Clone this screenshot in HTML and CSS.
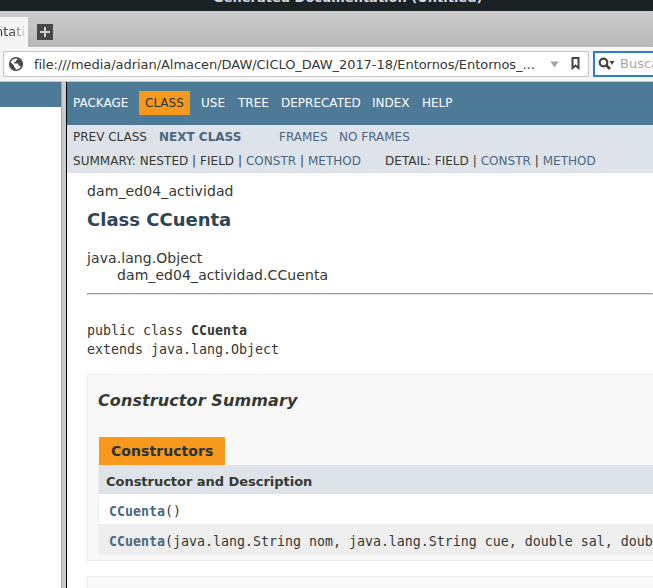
FILE: index.html
```html
<!DOCTYPE html>
<html lang="es">
<head>
<meta charset="utf-8">
<title>Generated Documentation (Untitled)</title>
<link rel="stylesheet" href="styles.css">
</head>
<body>
<div class="titlebar"><span>Generated Documentation (Untitled)</span></div>
<div class="tabs">
  <div class="tab"><span>ntati</span></div>
  <svg class="newtab" width="16" height="16" viewBox="0 0 16 16"><path fill="#474747" d="M0 0h16v16H0z"/><path fill="#d0d0d0" d="M7 3h2v4h4v2H9v4H7V9H3V7h4z"/></svg>
</div>
<div class="toolbar">
  <div class="address">
    <svg class="globe" width="16" height="16" viewBox="0 0 16 16"><circle cx="8" cy="8" r="6.300" fill="#fff" stroke="#4b4b4b" stroke-width="1.500"/><path fill="#4b4b4b" d="M2 5.500L6 9.500v1.200l1.500 1.300V14.500L4 13.500 1.500 10zM9.500 2v1.500L8 4.500v1.300H6.300v1.700H10l.8 2.300 1.400.3 1 1.400L14.500 9V6L12.500 3z"/></svg>
    <span class="url">file:///media/adrian/Almacen/DAW/CICLO_DAW_2017-18/Entornos/Entornos_...</span>
    <svg class="drop" width="9" height="7" viewBox="0 0 9 7"><path fill="#a5a5a5" d="M.3.500h8.400L4.500 6.500z"/></svg>
    <svg class="mark" width="9" height="14" viewBox="0 0 9 14"><path fill="none" stroke="#444" stroke-width="2" d="M1.500 1h6v10L4.500 8.500 1.500 11z"/></svg>
  </div>
  <div class="search">
    <svg width="17" height="14" viewBox="0 0 17 14"><circle cx="5.500" cy="5.500" r="3.800" fill="none" stroke="#444" stroke-width="2.200"/><path d="M8 8l4 4" stroke="#444" stroke-width="2.600"/><path fill="#444" d="M11.500 4h5l-2.500 4z"/></svg>
    <span>Buscar</span>
  </div>
</div>
<div class="frames">
  <div class="side"><div class="sidebar-top"></div></div>
  <div class="splitter"></div>
  <main>
    <nav class="topnav"><span>PACKAGE</span><span class="active">CLASS</span><span>USE</span><span>TREE</span><span>DEPRECATED</span><span>INDEX</span><span>HELP</span></nav>
    <div class="subnav">
      <div class="line seq"><span>PREV CLASS</span><a class="next">NEXT CLASS</a><a>FRAMES</a><a>NO FRAMES</a></div>
      <div class="line detail"><span>SUMMARY: NESTED | FIELD | <a>CONSTR</a> | <a>METHOD</a></span><span>DETAIL: FIELD | <a>CONSTR</a> | <a>METHOD</a></span></div>
    </div>
    <div class="content">
      <div class="package">dam_ed04_actividad</div>
      <h2>Class CCuenta</h2>
      <div class="tree"><div>java.lang.Object</div><div class="child">dam_ed04_actividad.CCuenta</div></div>
      <hr>
      <pre class="signature">public class <b>CCuenta</b>
extends java.lang.Object</pre>
      <section class="summary">
        <h3>Constructor Summary</h3>
        <div class="caption">Constructors</div>
        <div class="table">
          <div class="head">Constructor and Description</div>
          <div class="row"><code><a>CCuenta</a>()</code></div>
          <div class="row alt"><code><a>CCuenta</a>(java.lang.String nom, java.lang.String cue, double sal, double tipo)</code></div>
        </div>
      </section>
      <section class="summary nextbox"></section>
    </div>
  </main>
</div>
</body>
</html>
```

FILE: styles.css
```css
* { box-sizing: border-box; }
body { margin: 0; width: 653px; height: 588px; overflow: hidden; background: #fff; color: #353833; font-family: "DejaVu Sans", sans-serif; font-size: 14px; white-space: nowrap; }
svg { display: block; flex: none; }
.titlebar { height: 11px; background: #1b2224; color: #d3dae3; overflow: hidden; font-weight: bold; font-size: 13px; line-height: 16px; padding-left: 213px; }
.titlebar span { display: block; margin-top: -10px; }
.tabs { height: 36px; display: flex; background: linear-gradient(#cdcdcd, #b7b7b7); }
.tab { width: 28px; height: 30px; margin-top: 6px; background: #f5f5f5; overflow: hidden; line-height: 30px; font-size: 13px; }
.tab span { display: block; width: 32px; margin-left: -5px; background: linear-gradient(90deg, #353833 50%, #f5f5f5 100%); background-clip: text; color: transparent; }
.newtab { margin: 13px 0 0 9px; }
.toolbar { height: 35px; background: #f6f6f6; border-bottom: 1px solid #c8c8c8; display: flex; padding: 4px 0 0 3px; }
.address { width: 586px; flex: none; height: 26px; border: 1px solid #c8c8c8; background: #fff; display: flex; align-items: center; padding-left: 4px; }
.url { width: 512px; flex: none; margin-left: 10px; font-size: 13px; line-height: 24px; letter-spacing: -0.045px; position: relative; top: 1px; }
.drop { margin-left: 4px; }
.mark { margin-left: 12px; }
.search { width: 80px; flex: none; height: 26px; margin-left: 4px; border: 2px solid #2a7fd4; background: #fff; display: flex; align-items: center; padding-left: 3px; color: #a8a8a8; font-size: 13px; }
.search span { margin: -1px 0 0 5px; }
.frames { display: flex; height: 506px; }
.side { width: 61px; flex: none; }
.sidebar-top { height: 25px; background: #4d7a97; }
.splitter { width: 6px; flex: none; background: #cbcbcb; border-left: 1px solid #a5a5a5; border-right: 1px solid #000; }
main { width: 586px; flex: none; overflow: hidden; }
.topnav { height: 43px; padding: 9px 0 0 6px; background: #4d7a97; color: #fff; font-size: 12px; line-height: 24px; display: grid; grid-template-columns: 66px 51px 11px 37px 43px 91px 50px 60px; }
.topnav span:nth-child(3) { grid-column: 4; }
.topnav .active { background: #f8981d; color: #253441; padding-left: 6px; height: 24px; }
.subnav { height: 48px; background: #dee3e9; padding-left: 6px; font-size: 12px; line-height: 24px; }
a { color: #4a6782; }
.line { height: 24px; display: grid; }
.seq { grid-template-columns: 86px 120px 60px 80px; }
.detail { grid-template-columns: 312px 240px; letter-spacing: 0.03px; }
.next { font-weight: bold; }
.content { padding: 10px 0 0 20px; }
.package { line-height: 17px; letter-spacing: 0.11px; }
h2 { margin: 8px 0 0; font-size: 18px; line-height: 23px; color: #2c4557; }
.tree { margin-top: 19px; line-height: 17px; letter-spacing: 0.08px; }
.child { margin-left: 30px; }
hr { margin: 9px 0 0; height: 2px; border: 1px solid #e6e6e6; border-top-color: #999; border-left-color: #999; }
.signature { margin: 26px 0 0; line-height: 19px; }
pre, code { font-family: "DejaVu Sans Mono", monospace; font-size: 13.29px; }
.summary { margin-top: 15px; width: 620px; height: 187px; border: 1px solid #ededed; background: #f8f8f8; padding: 16px 0 0 10px; }
h3 { margin: 0; font-size: 16px; line-height: 20px; font-style: italic; letter-spacing: 0.1px; }
.caption { width: 126px; height: 28px; margin: 26px 0 0 1px; padding-left: 12px; background: #f8981d; color: #253441; font-weight: bold; line-height: 28px; letter-spacing: 0.06px; }
.table { border-left: 1px solid #eee; }
.head { height: 29px; padding-left: 7px; background: #dee3e9; font-weight: bold; font-size: 13px; line-height: 33px; letter-spacing: -0.03px; }
.row { height: 30px; padding-left: 10px; background: #fff; line-height: 35px; }
.row code { display: block; }
.row a { font-weight: bold; }
.alt { height: 31px; background: #eeeeef; }
```
